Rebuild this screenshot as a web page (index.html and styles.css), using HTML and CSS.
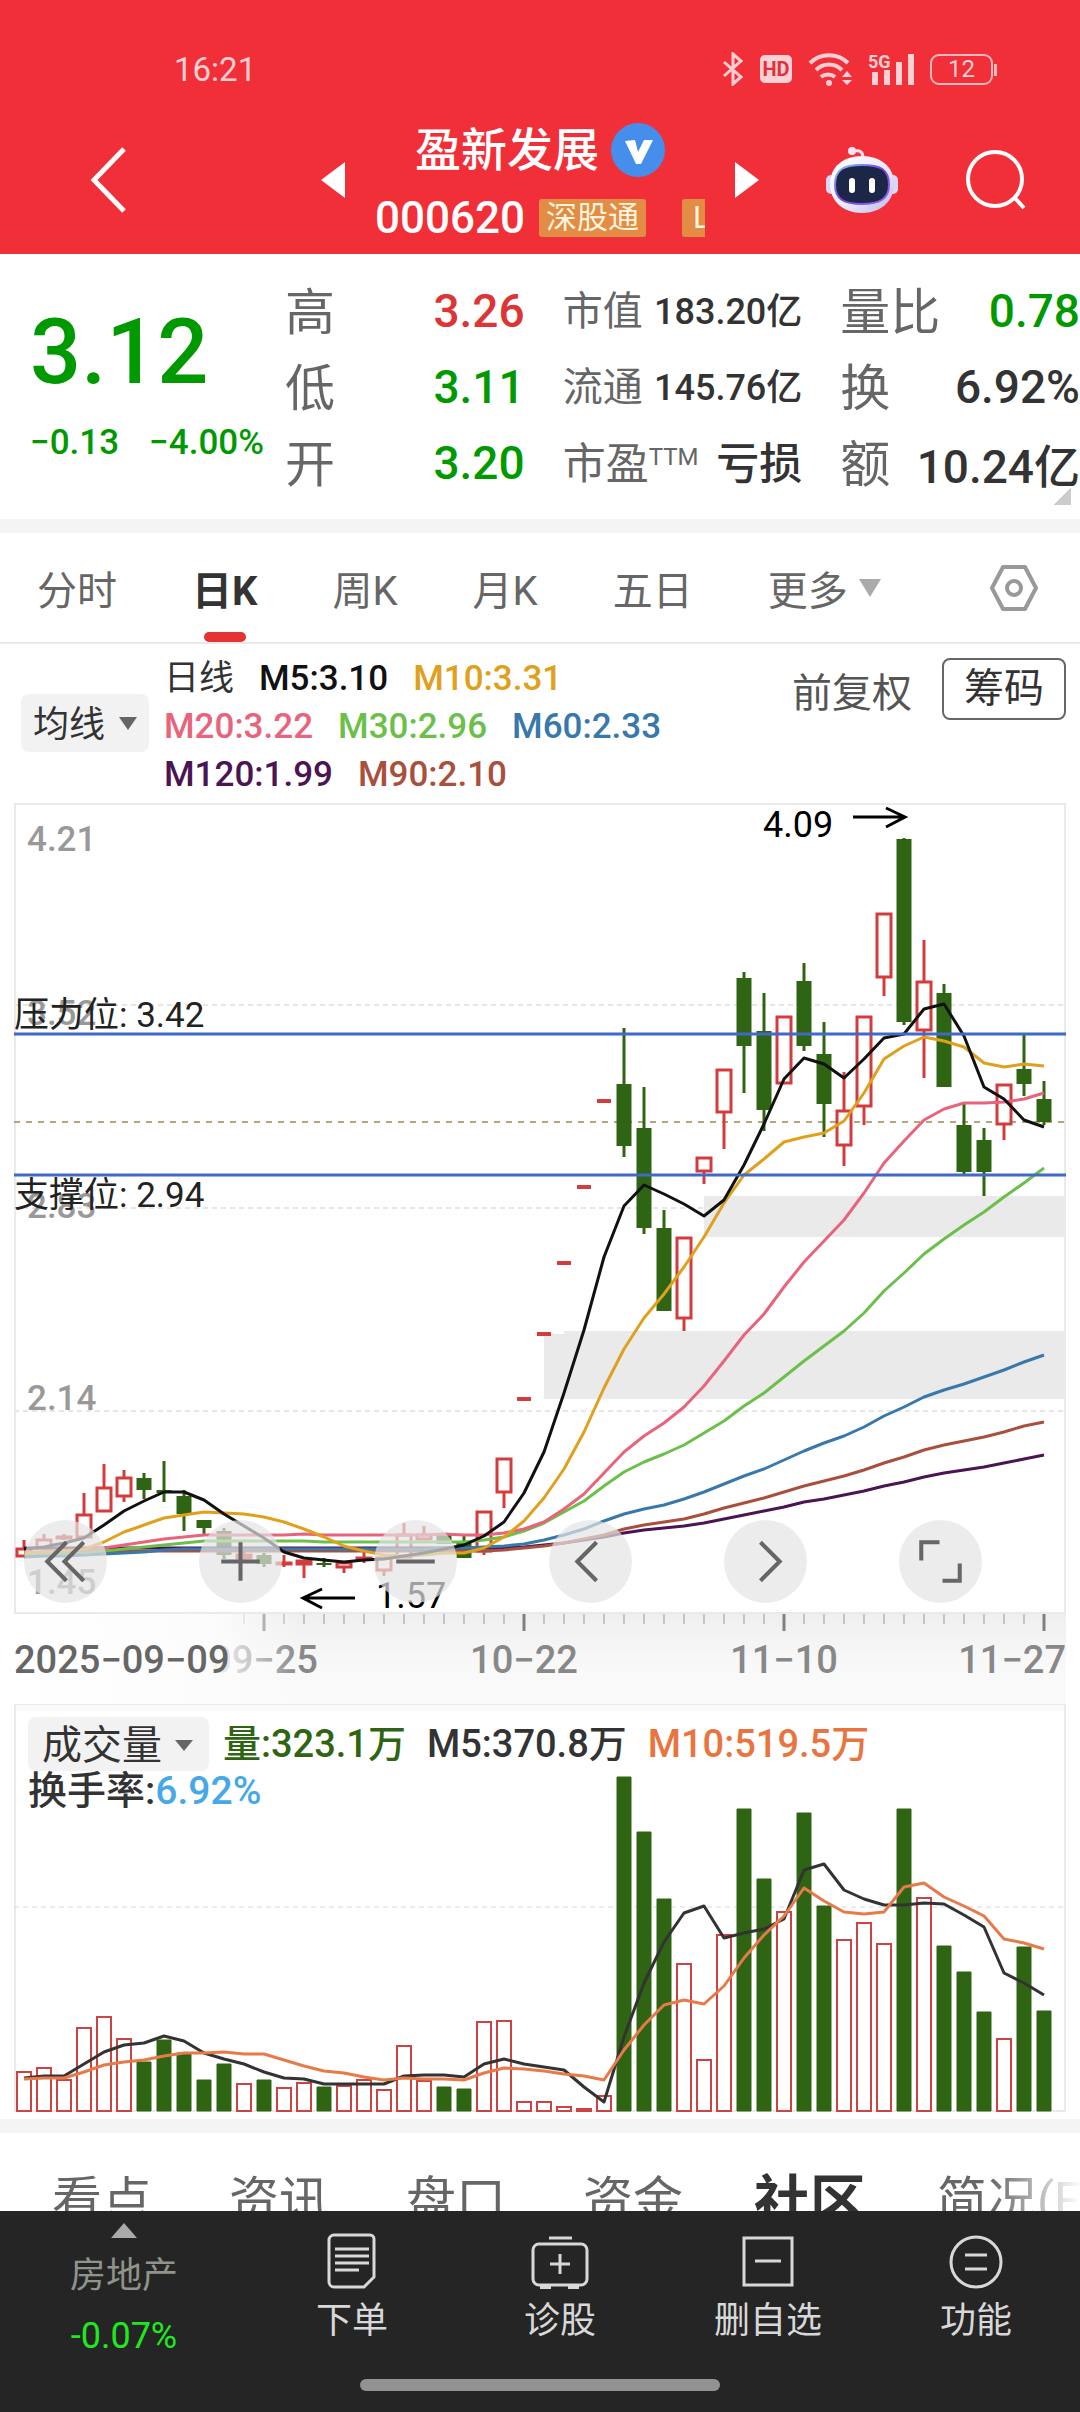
FILE: index.html
```html
<!DOCTYPE html>
<html lang="zh-CN">
<head>
<meta charset="utf-8">
<meta name="viewport" content="width=device-width, initial-scale=1">
<title>盈新发展 000620</title>
<link rel="stylesheet" href="styles.css">
</head>
<body>
<div class="app">
  <header class="header">
    <div class="status">
      <time>16:21</time>
      <div class="status-icons">
        <svg width="22" height="34" viewBox="0 0 22 34" fill="none" stroke="currentColor" stroke-width="3"><path d="M2 10l17 15-8 7V2l8 7L2 24"/></svg>
        <span class="hd">HD</span>
        <svg width="44" height="34" viewBox="0 0 44 34" fill="none" stroke="currentColor" stroke-width="4"><path d="M2 11a27 27 0 0 1 38 0M8 18a18 18 0 0 1 26 0M13 25a11 11 0 0 1 14 0"/><circle cx="21" cy="31" r="3" fill="currentColor" stroke="none"/><path d="M34 25l5-6 5 6zM34 28l5 5 5-5z" fill="currentColor" stroke="none"/></svg>
        <svg width="46" height="34" viewBox="0 0 46 34" fill="currentColor"><text class="net" x="0" y="16">5G</text><path d="M4 20h6v13H4zM16 18h6v15h-6zM28 10h6v23h-6zM40 2h6v31h-6z"/></svg>
        <span class="battery">12</span>
      </div>
    </div>
    <div class="titlebar">
      <button class="icon-btn" aria-label="返回"><svg width="36" height="66" viewBox="0 0 36 66" fill="none" stroke="#fff" stroke-width="5"><path d="M34 2L4 33l30 31"/></svg></button>
      <div class="switcher">
        <button class="icon-btn" aria-label="上一只"><svg width="24" height="36" viewBox="0 0 24 36" fill="#fff"><path d="M24 0v36L0 18z"/></svg></button>
        <div class="stock">
          <h1 class="stock-name">盈新发展<svg width="54" height="54" viewBox="0 0 54 54"><circle cx="27" cy="27" r="27" fill="#468eec"/><path d="M14 18l10-1 3 12 6-12h9L30 41h-5z" fill="#fff"/></svg></h1>
          <div class="stock-code">000620<span class="tag">深股通</span><span class="tag tag-next">L</span></div>
        </div>
        <button class="icon-btn" aria-label="下一只"><svg width="24" height="36" viewBox="0 0 24 36" fill="#fff"><path d="M0 0v36l24-18z"/></svg></button>
      </div>
      <div class="tools">
        <button class="icon-btn" aria-label="智能助手">
          <svg width="72" height="68" viewBox="0 0 72 68">
            <defs>
              <linearGradient id="shell" x1="0" y1="0" x2="1" y2="1"><stop offset="0" stop-color="#fff"/><stop offset=".55" stop-color="#ecebfb"/><stop offset="1" stop-color="#b9b6ea"/></linearGradient>
              <linearGradient id="rim" x1="0" y1="0" x2="1" y2="1"><stop offset="0" stop-color="#7fc8f0"/><stop offset=".5" stop-color="#7a3fe0"/><stop offset="1" stop-color="#9a6bf0"/></linearGradient>
            </defs>
            <path d="M28 5q9-2 9 7" fill="none" stroke="#f6dff0" stroke-width="3"/><circle cx="26" cy="5" r="4" fill="#f8e6f4"/>
            <rect x="0" y="29" width="12" height="19" rx="5" fill="#d9d6f6"/><rect x="60" y="29" width="12" height="19" rx="5" fill="#d9d6f6"/>
            <path d="M36 10c19 0 32 11 32 28S55 67 36 67 4 55 4 38 17 10 36 10z" fill="url(#shell)"/>
            <path d="M36 19c18 0 27 4 27 20 0 14-9 19-27 19S9 53 9 39c0-16 9-20 27-20z" fill="#1c2748" stroke="url(#rim)" stroke-width="2"/>
            <rect x="23" y="32" width="6" height="15" rx="3" fill="#fff"/><rect x="43" y="32" width="6" height="15" rx="3" fill="#fff"/>
          </svg>
        </button>
        <button class="icon-btn" aria-label="搜索"><svg width="60" height="60" viewBox="0 0 60 60" fill="none" stroke="#fff" stroke-width="4"><circle cx="29" cy="29" r="27"/><path d="M48 47l10 11"/></svg></button>
      </div>
    </div>
  </header>

  <main class="content">
    <section class="quote">
      <div class="price">
        <strong class="last">3.12</strong>
        <div class="change"><span>−0.13</span><span>−4.00%</span></div>
      </div>
      <dl class="stats">
        <div><dt>高</dt><dd class="up">3.26</dd></div>
        <div><dt>低</dt><dd class="down">3.11</dd></div>
        <div><dt>开</dt><dd class="down">3.20</dd></div>
      </dl>
      <dl class="stats stats-small">
        <div><dt>市值</dt><dd>183.20亿</dd></div>
        <div><dt>流通</dt><dd>145.76亿</dd></div>
        <div><dt class="pe">市盈<sup>TTM</sup></dt><dd class="pe">亏损</dd></div>
      </dl>
      <dl class="stats">
        <div><dt>量比</dt><dd class="down">0.78</dd></div>
        <div><dt>换</dt><dd>6.92%</dd></div>
        <div><dt>额</dt><dd>10.24亿</dd></div>
      </dl>
      <i class="corner"></i>
    </section>

    <nav class="periods">
      <button>分时</button>
      <button class="active">日K</button>
      <button>周K</button>
      <button>月K</button>
      <button>五日</button>
      <button class="more">更多</button>
      <button class="settings" aria-label="设置"><svg width="50" height="46" viewBox="0 0 50 46" fill="none" stroke="#999" stroke-width="4" stroke-linejoin="round"><path d="M14 2h22l11 21-11 21H14L3 23z"/><circle cx="25" cy="23" r="7"/></svg></button>
    </nav>

    <section class="legend">
      <label class="picker"><select aria-label="主图指标"><option>均线</option></select></label>
      <div class="averages">
        <span>日线</span><span class="m5">M5:3.10</span><span class="m10">M10:3.31</span>
        <span class="m20">M20:3.22</span><span class="m30">M30:2.96</span><span class="m60">M60:2.33</span>
        <span class="m120">M120:1.99</span><span class="m90">M90:2.10</span>
      </div>
      <div class="legend-actions">
        <button class="plain">前复权</button>
        <button class="chips">筹码</button>
      </div>
    </section>

    <section class="chart">
      <svg class="plot" viewBox="0 800 1080 904">
        <defs>
          <linearGradient id="axisBg" x1="0" y1="0" x2="0" y2="1"><stop offset="0" stop-color="#efefef"/><stop offset=".6" stop-color="#f9f9f9"/><stop offset="1" stop-color="#fafafa"/></linearGradient>
          <linearGradient id="axisFade" x1="0" y1="0" x2="1" y2="0"><stop offset="0" stop-color="#fff"/><stop offset=".7" stop-color="#fcfcfc" stop-opacity=".95"/><stop offset="1" stop-color="#fcfcfc" stop-opacity="0"/></linearGradient>
        </defs>
        <rect class="frame" x="15" y="804" width="1050" height="809"/>
        <path class="grid" d="M14 1005H1066M14 1208H1066M14 1411H1066"/>
        <path class="current" d="M14 1122H1066"/>
        <g class="axis-label"><text x="27" y="851">4.21</text><text x="27" y="1025">3.52</text><text x="27" y="1218">2.83</text><text x="27" y="1410">2.14</text><text x="27" y="1594">1.45</text></g>
        <path class="gap" d="M704 1196H1066V1237H704zM544 1334H564V1331H1066V1399H544z"/>
        <g id="candles"></g>
        <g id="averages"></g>
        <path class="level" d="M14 1034H1066M14 1175H1066"/>
        <g class="note"><text x="14" y="1027">压力位: 3.42</text><text x="14" y="1207">支撑位: 2.94</text></g>
        <g class="mark"><text x="763" y="837">4.09</text><path d="M853 817H904M886 808L905 817L886 827"/><text x="376" y="1608">1.57</text><path d="M355 1598H304M322 1589L303 1598L322 1608"/></g>
        <rect x="14" y="1614" width="1052" height="90" fill="url(#axisBg)"/>
        <g id="ticks"></g>
        <g class="date"><text x="264" y="1673" text-anchor="middle">09−25</text><text x="524" y="1673" text-anchor="middle">10−22</text><text x="784" y="1673" text-anchor="middle">11−10</text><text x="1066" y="1673" text-anchor="end">11−27</text></g>
        <rect x="14" y="1614" width="286" height="90" fill="url(#axisFade)"/>
        <text class="date-start" x="14" y="1673">2025−09−09</text>
      </svg>
      <div class="chart-controls">
        <button aria-label="最早"><svg viewBox="0 0 82 82"><path d="M42 22L23 41l19 19M59 22L40 41l19 19"/></svg></button>
        <button aria-label="放大"><svg viewBox="0 0 82 82"><path d="M41 22v38M22 41h38"/></svg></button>
        <button aria-label="缩小"><svg viewBox="0 0 82 82"><path d="M22 41h38"/></svg></button>
        <button aria-label="向前"><svg viewBox="0 0 82 82"><path d="M47 22L28 41l19 19"/></svg></button>
        <button aria-label="向后"><svg viewBox="0 0 82 82"><path d="M36 22l19 19-19 19"/></svg></button>
        <button aria-label="全屏"><svg viewBox="0 0 82 82"><path d="M22 40V22h18M60 43v17H43"/></svg></button>
      </div>
    </section>

    <section class="chart">
      <svg class="plot" viewBox="0 1704 1080 415">
        <rect x="14" y="1704" width="1052" height="7" fill="#fafafa"/>
        <rect class="frame" x="15" y="1704" width="1050" height="407"/>
        <path class="grid volume-grid" d="M14 1907H1066"/>
        <g id="volumes"></g>
        <g id="volumeAverages"></g>
      </svg>
      <div class="volume-legend">
        <div class="volume-row">
          <label class="picker picker-large"><select aria-label="副图指标"><option>成交量</option></select></label>
          <span class="vol">量:323.1万</span><span>M5:370.8万</span><span class="vol-m10">M10:519.5万</span>
        </div>
        <div class="turnover">换手率:<span>6.92%</span></div>
      </div>
    </section>

    <nav class="sections">
      <a href="#insight">看点</a><a href="#news">资讯</a><a href="#book">盘口</a><a href="#funds">资金</a><a class="active" href="#community">社区</a><a href="#profile">简况(F10)</a>
    </nav>
  </main>

  <footer class="footer">
    <nav class="actions">
      <button class="sector"><i></i><span>房地产</span><b>-0.07%</b></button>
      <button><svg width="58" height="58" viewBox="0 0 58 58"><path d="M11 3h36a4 4 0 0 1 4 4v38L41 55H11a5 5 0 0 1-5-5V8a5 5 0 0 1 5-5z"/><path d="M12 17h34M12 24h34M12 31h34M12 38h24"/></svg>下单</button>
      <button><svg width="58" height="58" viewBox="0 0 58 58"><path d="M18 6h23"/><rect x="2" y="12" width="54" height="41" rx="6"/><path d="M19 32h20M29 22v20"/><path d="M9 55h11M37 55h11" stroke-width="4"/></svg>诊股</button>
      <button><svg width="58" height="58" viewBox="0 0 58 58"><rect x="5" y="6" width="48" height="47"/><path d="M16 29h26"/></svg>删自选</button>
      <button><svg width="58" height="58" viewBox="0 0 58 58"><circle cx="29" cy="30" r="25"/><path d="M18 23h22M18 37h22"/></svg>功能</button>
    </nav>
    <div class="home-bar"></div>
  </footer>
</div>
<script src="chart.js"></script>
</body>
</html>
```
FILE: chart.js
```js
const NS = 'http://www.w3.org/2000/svg';
const START = 24, STEP = 20, BASE = 2112;
const x = i => START + STEP * i;

// Each candle: direction, high, body top, body bottom, low
const candles = [
  ['r',1540,1549,1556,1557],['r',1534,1540,1548,1549],['r',1534,1537,1538,1540],['r',1493,1515,1537,1537],
  ['r',1464,1488,1511,1511],['r',1470,1478,1496,1502],['g',1473,1478,1490,1499],['g',1461,1490,1493,1502],
  ['g',1490,1496,1514,1531],['g',1520,1520,1528,1536],['g',1528,1531,1555,1559],['r',1552,1555,1558,1563],
  ['g',1553,1555,1564,1567],['r',1555,1563,1564,1567],['r',1560,1561,1564,1578],['g',1558,1563,1565,1567],
  ['r',1563,1563,1567,1573],['r',1551,1558,1559,1563],['r',1558,1558,1570,1576],['r',1523,1535,1557,1558],
  ['r',1526,1535,1539,1539],['g',1535,1535,1544,1544],['g',1536,1543,1558,1558],['r',1512,1512,1551,1555],
  ['r',1459,1459,1492,1508],['r',1399,1399,1399,1399],['r',1334,1334,1334,1334],['r',1263,1263,1263,1263],
  ['r',1187,1187,1187,1187],['r',1101,1101,1101,1101],['g',1028,1084,1146,1157],['g',1087,1128,1228,1234],
  ['g',1210,1228,1311,1311],['r',1238,1238,1318,1331],['r',1158,1158,1171,1184],['r',1070,1070,1112,1149],
  ['g',972,978,1046,1093],['g',993,1031,1110,1131],['r',1017,1017,1083,1083],['g',963,981,1046,1051],
  ['g',1022,1054,1104,1137],['r',1072,1111,1145,1166],['r',1017,1017,1106,1125],['r',914,914,977,996],
  ['g',838,839,1022,1025],['r',940,982,1030,1078],['g',984,993,1087,1087],['g',1104,1125,1172,1175],
  ['g',1128,1140,1172,1196],['r',1085,1085,1124,1140],['g',1035,1069,1084,1096],['g',1081,1099,1122,1125]
];

const volumes = [2072,2068,2080,2028,2017,2039,2062,2040,2053,2080,2064,2084,2080,2088,2083,2087,2086,2080,2090,2046,
  2081,2087,2089,2022,2021,2102,2102,2107,2109,2096,1777,1832,1899,1964,2060,1935,1809,1879,1912,1813,1906,1940,1923,
  1944,1809,1898,1946,1972,2012,2039,1947,2011];

const averages = {
  m120: [1548,1548,1548,1548,1548,1548,1548,1548,1548,1548,1548,1548,1548,1548,1548,1548,1548,1548,1548,1548,1548,1548,
    1548,1548,1548,1547,1545,1543,1540,1537,1533,1530,1528,1526,1523,1519,1515,1511,1507,1502,1499,1495,1491,1486,1482,
    1477,1473,1470,1467,1463,1459,1455],
  m90: [1554,1553,1553,1552,1552,1551,1551,1551,1551,1551,1551,1551,1551,1551,1551,1551,1551,1551,1551,1551,1551,1551,
    1551,1551,1550,1548,1546,1543,1539,1535,1529,1525,1522,1519,1514,1508,1503,1498,1492,1486,1481,1476,1470,1463,1457,
    1450,1445,1441,1437,1432,1426,1422],
  m60: [1557,1556,1556,1555,1554,1553,1552,1550,1549,1549,1549,1549,1549,1549,1549,1549,1549,1549,1549,1549,1549,1548,
    1548,1547,1546,1544,1540,1535,1529,1521,1514,1509,1505,1499,1492,1484,1476,1469,1460,1451,1443,1436,1427,1416,1407,
    1397,1390,1384,1377,1370,1362,1355],
  m30: [1554,1553,1553,1552,1551,1549,1547,1545,1543,1541,1541,1541,1541,1541,1541,1542,1542,1542,1542,1542,1542,1542,
    1542,1540,1537,1531,1523,1512,1501,1486,1472,1462,1454,1445,1433,1421,1406,1393,1377,1361,1346,1331,1313,1291,1273,
    1254,1239,1225,1212,1197,1183,1168],
  m20: [1552,1552,1551,1550,1548,1545,1542,1539,1537,1535,1535,1535,1535,1535,1534,1535,1535,1535,1535,1535,1535,1534,
    1535,1535,1533,1529,1522,1509,1494,1473,1452,1436,1423,1407,1386,1361,1335,1314,1287,1262,1241,1220,1193,1163,1141,
    1120,1109,1103,1103,1102,1099,1093],
  m10: [1553,1552,1551,1549,1542,1532,1525,1518,1515,1512,1513,1514,1517,1522,1529,1537,1546,1551,1555,1556,1555,1553,
    1553,1548,1537,1521,1498,1469,1432,1388,1349,1318,1294,1267,1237,1203,1175,1159,1142,1137,1133,1121,1093,1059,1046,
    1037,1041,1047,1063,1067,1064,1066],
  m5: [1549,1547,1543,1538,1525,1511,1501,1492,1492,1500,1514,1526,1538,1552,1558,1560,1562,1560,1559,1556,1553,1549,
    1545,1536,1522,1493,1452,1393,1330,1257,1206,1185,1194,1204,1216,1200,1165,1124,1079,1058,1064,1078,1059,1038,1034,
    1009,1004,1036,1087,1099,1120,1127]
};

const volumeAverages = {
  v5: [2078,2076,2076,2064,2052,2045,2043,2036,2041,2053,2059,2064,2072,2078,2079,2084,2084,2084,2084,2076,2075,2075,
    2077,2064,2059,2064,2067,2070,2087,2102,2037,1983,1942,1913,1906,1938,1933,1929,1919,1870,1864,1890,1899,1905,1905,
    1903,1904,1915,1927,1973,1983,1995],
  v10: [2079,2078,2078,2072,2065,2062,2060,2056,2053,2053,2052,2054,2054,2060,2066,2071,2073,2077,2080,2078,2079,2079,
    2080,2073,2068,2069,2071,2074,2076,2080,2050,2025,2005,2000,2004,1986,1958,1935,1916,1888,1901,1912,1914,1912,1887,
    1883,1897,1906,1916,1939,1943,1949]
};

function add(parent, tag, attrs) {
  const node = document.createElementNS(NS, tag);
  for (const key in attrs) node.setAttribute(key, attrs[key]);
  parent.appendChild(node);
}

const candleLayer = document.getElementById('candles');
const volumeLayer = document.getElementById('volumes');
candles.forEach(([dir, high, top, bottom, low], i) => {
  const body = dir === 'g'
    ? `M${x(i) - 7.5} ${top}h15V${bottom}h-15z`
    : `M${x(i) - 7} ${top}h14V${bottom}h-14z`;
  const flat = high === low ? ' flat' : '';
  add(candleLayer, 'path', { class: dir, d: `M${x(i)} ${high}V${top}M${x(i)} ${bottom}V${low}` });
  add(candleLayer, 'path', { class: dir + ' body' + flat, d: body });
  add(volumeLayer, 'path', { class: dir + ' bar', d: `M${x(i) - 7} ${volumes[i]}h14V${BASE - 1}h-14z` });
});

function lines(id, series) {
  const layer = document.getElementById(id);
  for (const name in series) {
    add(layer, 'polyline', { class: 'line ' + name, points: series[name].map((y, i) => `${x(i)},${y}`).join(' ') });
  }
}
lines('averages', averages);
lines('volumeAverages', volumeAverages);

const tickLayer = document.getElementById('ticks');
for (let i = 11; i < 52; i++) {
  const major = (i - 12) % 13 === 0;
  add(tickLayer, 'path', { class: major ? 'tick major' : 'tick', d: `M${x(i)} 1614v${major ? 17 : 10}` });
}
```
FILE: styles.css
```css
* { box-sizing: border-box; }

body {
  margin: 0;
  background: #fff;
  color: #333;
  font-family: Roboto, "Noto Sans CJK SC", sans-serif;
}

button, select {
  margin: 0;
  padding: 0;
  border: 0;
  background: none;
  color: inherit;
  font: inherit;
}

h1, dl, dd { margin: 0; }

svg { display: block; }

.app {
  display: flex;
  flex-direction: column;
  height: 100vh;
}

/* Header */
.header {
  flex: none;
  background: #f12f38;
  color: #fff;
}

.status {
  display: flex;
  align-items: center;
  justify-content: space-between;
  height: 92px;
  padding: 46px 83px 0 174px;
  color: #ffd0d3;
  font-size: 33px;
}

.status-icons {
  display: flex;
  align-items: center;
  gap: 16px;
}

.hd {
  width: 32px;
  border-radius: 5px;
  background: #ffd0d3;
  color: #e0303a;
  font-size: 20px;
  font-weight: 700;
  line-height: 28px;
  text-align: center;
}

.net {
  font-size: 18px;
  font-weight: 700;
}

.battery {
  position: relative;
  width: 63px;
  margin-right: 4px;
  border: 2px solid #ffb9be;
  border-radius: 9px;
  font-size: 24px;
  line-height: 27px;
  text-align: center;
}

.battery::after {
  content: "";
  position: absolute;
  top: 8px;
  right: -6px;
  width: 3px;
  height: 12px;
  background: #ffb9be;
}

.titlebar {
  display: grid;
  grid-template-columns: 1fr auto 1fr;
  align-items: center;
  height: 162px;
  padding: 14px 54px 0 90px;
}

.titlebar > .icon-btn { justify-self: start; }
.switcher { margin-left: -36px; }

.switcher, .tools {
  display: flex;
  align-items: center;
}

.switcher { gap: 30px; }

.tools {
  justify-content: flex-end;
  gap: 68px;
}

.stock {
  display: grid;
  gap: 12px;
  width: 330px;
  padding-top: 8px;
}

.stock-name {
  display: flex;
  align-items: center;
  justify-content: center;
  gap: 12px;
  height: 56px;
  font-size: 46px;
  font-weight: 500;
  line-height: 48px;
}

.stock-code {
  display: flex;
  align-items: center;
  height: 56px;
  overflow: hidden;
  font-size: 44px;
  font-weight: 500;
}

.tag {
  flex: none;
  margin-left: 14px;
  padding: 0 7px;
  border-radius: 3px;
  background: #e28c46;
  color: #fff4dc;
  font-size: 31px;
  font-weight: 400;
  line-height: 38px;
}

.tag-next {
  margin-left: 36px;
  padding: 0 11px;
}

/* Scrolling content */
.content {
  flex: 1;
  min-height: 0;
  overflow-y: auto;
  scrollbar-width: none;
}

.quote {
  position: relative;
  display: grid;
  grid-template-columns: 217px 1fr 1fr 1fr;
  column-gap: 38px;
  padding: 19px 0 18px 30px;
  border-bottom: 14px solid #f4f4f4;
}

.price {
  padding-top: 30px;
  color: #009a00;
  white-space: nowrap;
}

.last {
  display: block;
  font-size: 90px;
  font-weight: 500;
  line-height: 100px;
}

.change {
  display: flex;
  gap: 30px;
  margin-top: 20px;
  font-size: 35px;
  font-weight: 500;
  line-height: 40px;
}

.stats > div {
  display: flex;
  align-items: center;
  justify-content: space-between;
  height: 76px;
  white-space: nowrap;
}

.stats dt {
  padding-bottom: 6px;
  color: #666;
  font-size: 50px;
}

.stats dd {
  font-size: 46px;
  font-weight: 500;
}

.stats-small dt { font-size: 40px; }

.stats-small dd {
  padding-bottom: 6px;
  font-size: 36px;
}

.stats-small .pe { font-size: 43px; }

.pe sup {
  font-size: 24px;
  line-height: 1;
  vertical-align: 14px;
}

.up { color: #dc3535; }
.down { color: #009a00; }

.corner {
  position: absolute;
  right: 9px;
  bottom: 14px;
  width: 18px;
  height: 18px;
  background: linear-gradient(135deg, transparent 50%, #ccc 50%);
}

.periods {
  display: flex;
  align-items: center;
  gap: 75px;
  height: 111px;
  padding: 0 41px 0 37px;
  border-bottom: 2px solid #eaeaea;
  color: #666;
  font-size: 40px;
}

.periods button {
  position: relative;
  height: 100%;
  white-space: nowrap;
}

.periods .active {
  color: #333;
  font-weight: 700;
}

.periods .active::after {
  content: "";
  position: absolute;
  bottom: 0;
  left: 50%;
  width: 42px;
  height: 10px;
  margin-left: -21px;
  border-radius: 5px;
  background: #e53232;
}

.more {
  display: flex;
  align-items: center;
  gap: 11px;
}

.more::after {
  content: "";
  border: 11px solid transparent;
  border-top: 18px solid #aaa;
  border-bottom: 0;
}

.periods .settings {
  display: flex;
  align-items: center;
  margin-left: auto;
}

/* Moving average legend */
.legend {
  display: flex;
  align-items: flex-start;
  padding: 11px 14px 1px 21px;
}

.picker {
  position: relative;
  display: block;
  flex: none;
  height: 58px;
  border-radius: 8px;
  background: #f2f2f2;
}

.legend .picker { margin-top: 39px; }

.picker::after {
  content: "";
  position: absolute;
  top: 23px;
  right: 12px;
  border: 9px solid transparent;
  border-top: 13px solid #666;
  border-bottom: 0;
  pointer-events: none;
}

.picker select {
  height: 100%;
  padding: 3px 43px 0 12px;
  appearance: none;
  font-size: 36px;
}

.averages {
  display: flex;
  flex-wrap: wrap;
  column-gap: 25px;
  width: 540px;
  margin-left: 15px;
  font-size: 35px;
  font-weight: 500;
  line-height: 48px;
}

.averages span:first-child { font-weight: 400; }

.legend-actions {
  display: flex;
  align-items: center;
  gap: 30px;
  margin: 3px 0 0 auto;
  font-size: 40px;
}

.plain {
  padding-top: 2px;
  color: #555;
}

.chips {
  width: 124px;
  height: 62px;
  border: 2px solid #666;
  border-radius: 8px;
  line-height: 52px;
}

.m5 { color: #111; }
.m10 { color: #dfa01e; }
.m20 { color: #e8647c; }
.m30 { color: #6cbf4b; }
.m60 { color: #3878ab; }
.m90 { color: #a9503c; }
.m120 { color: #4b1452; }

/* Charts */
.chart { position: relative; }

.plot {
  width: 100%;
  height: auto;
}

.frame { fill: none; stroke: #eaeaea; stroke-width: 2; }
.grid { stroke: #e6e6e6; stroke-width: 2; stroke-dasharray: 5 4; }
.volume-grid { stroke: #d8d8d8; stroke-width: 1; }
.current { stroke: #b5a67c; stroke-width: 2; stroke-dasharray: 6 6; }
.gap { fill: #eaeaea; }
.level { stroke: #4169c8; stroke-width: 3; }

.axis-label { fill: #999; font-size: 35px; font-weight: 500; }
.note { fill: #222; font-size: 35px; }
.mark { fill: none; stroke: #000; stroke-width: 3; }
.mark text { fill: #000; stroke: none; font-size: 36px; }

.date, .date-start { font-size: 38px; font-weight: 500; }
.date { fill: #888; }
.date-start { fill: #666; }

.tick { stroke: #999; stroke-width: 1; }
.major { stroke: #808080; stroke-width: 3; }

.r { fill: none; stroke: #d33c3c; stroke-width: 3; }
.g { fill: none; stroke: #2f6413; stroke-width: 3; }
.r.body { fill: #fff; }
.r.flat { stroke-width: 4; }
.g.body { fill: #2f6413; stroke: none; }
.r.bar { fill: #fff; stroke: #cc4343; stroke-width: 2; }
.g.bar { fill: #2f6413; stroke: #2f6413; stroke-width: 1; }

.line { fill: none; stroke: currentColor; stroke-width: 3; stroke-linejoin: round; }
.v5 { color: #333; }
.v10 { color: #e67a49; }

.chart-controls {
  position: absolute;
  right: 98px;
  bottom: 101px;
  left: 24px;
  display: flex;
  justify-content: space-between;
}

.chart-controls button {
  width: 83px;
  height: 83px;
  border-radius: 50%;
  background: rgba(228, 228, 228, .7);
}

.chart-controls svg { fill: none; stroke: #666; stroke-width: 4; }

.volume-legend {
  position: absolute;
  top: 13px;
  left: 28px;
}

.volume-row {
  display: flex;
  align-items: center;
  gap: 21px;
  font-size: 38px;
  font-weight: 500;
  line-height: 46px;
  white-space: nowrap;
}

.picker-large {
  height: 54px;
  margin-right: -7px;
  font-weight: 400;
}

.picker-large::after { right: 16px; border-top-width: 11px; }

.picker-large select {
  padding: 3px 47px 0 14px;
  font-size: 40px;
}

.vol { color: #2f6413; }
.vol-m10 { color: #e8743f; }

.turnover {
  font-size: 39px;
  font-weight: 500;
  line-height: 40px;
}

.turnover span { color: #47a8e8; }

.sections {
  position: relative;
  display: flex;
  align-items: center;
  gap: 77px;
  height: 140px;
  padding-left: 52px;
  overflow: hidden;
  border-top: 14px solid #f4f4f4;
  font-size: 50px;
  white-space: nowrap;
}

.sections a {
  color: #666;
  text-decoration: none;
}

.sections .active {
  margin: 0 -6px;
  color: #333;
  font-size: 56px;
  font-weight: 700;
}

.sections::after {
  content: "";
  position: absolute;
  top: 0;
  right: 0;
  bottom: 0;
  width: 90px;
  background: linear-gradient(90deg, rgba(255, 255, 255, 0), #fff);
}

/* Bottom bar */
.footer {
  flex: none;
  height: 201px;
  background: #252525;
  color: #d8d8d8;
}

.actions {
  display: flex;
  height: 168px;
  font-size: 36px;
}

.actions button {
  display: flex;
  flex: 1;
  flex-direction: column;
  align-items: center;
  gap: 9px;
  padding-top: 21px;
  line-height: 44px;
}

.actions svg { fill: none; stroke: #d8d8d8; stroke-width: 3; }

.actions .sector {
  flex: 0 0 248px;
  gap: 16px;
  padding-top: 12px;
  color: #8f948b;
}

.sector i {
  border: 13px solid transparent;
  border-top: 0;
  border-bottom: 15px solid #aaa;
}

.sector b {
  color: #20e820;
  font-weight: 400;
}

.home-bar {
  width: 33.33%;
  height: 12px;
  margin: 0 auto;
  border-radius: 6px;
  background: #929292;
}
```
